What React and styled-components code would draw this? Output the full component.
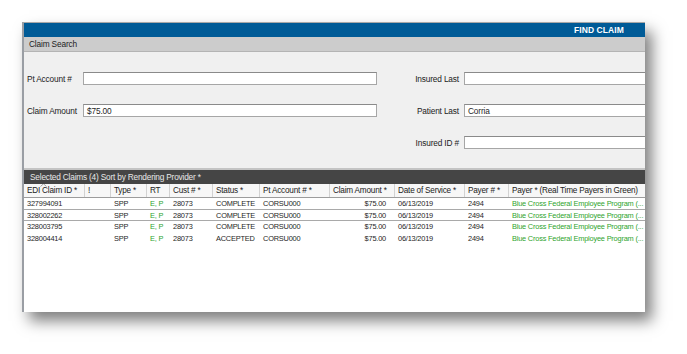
import React from "react";
import styled, { createGlobalStyle } from "styled-components";

const GlobalStyle = createGlobalStyle`
	html, body {
		margin: 0;
		padding: 0;
		background: #ffffff;
	}
	body {
		font-family: "Liberation Sans", Arial, sans-serif;
		color: #1e1e1e;
	}
`;

const Page = styled.div`
	width: 687px;
	height: 354px;
	padding: 22px 0 0 22px;
	box-sizing: border-box;
	overflow: hidden;
`;

const Window = styled.div`
	width: 623px;
	height: 290px;
	box-sizing: border-box;
	display: flex;
	flex-direction: column;
	background: #ffffff;
	border-top: 1px solid #a8a8a8;
	border-left: 2px solid #9a9ea4;
	overflow: hidden;
	box-shadow: 7px 9px 14px rgba(0, 0, 0, 0.5);
`;

const TitleBar = styled.div`
	height: 14px;
	flex: none;
	background: #005b97;
	color: #ffffff;
	font-size: 8.5px;
	font-weight: 700;
	display: flex;
	align-items: center;
	justify-content: flex-end;
	padding-right: 21px;
	letter-spacing: 0.1px;
`;

const SectionBar = styled.div`
	height: 15px;
	flex: none;
	box-sizing: border-box;
	background: #cccccc;
	border-bottom: 1px solid #b4b4b4;
	font-size: 8.3px;
	letter-spacing: -0.15px;
	display: flex;
	align-items: center;
	padding-left: 5px;
	color: #222;
`;

const Form = styled.div`
	height: 118px;
	flex: none;
	box-sizing: border-box;
	background: #f0f0f0;
	border-bottom: 2px solid #c4c4c4;
	padding: 20px 0 0 3px;
	display: grid;
	grid-template-columns: 56px 294px 87px 200px;
	grid-template-rows: 13px 13px 13px;
	row-gap: 19px;
	align-items: center;
`;

const Label = styled.span`
	font-size: 8.3px;
	letter-spacing: -0.15px;
	color: #222;
	white-space: nowrap;
	text-align: ${(p) => (p.right ? "right" : "left")};
	padding-right: ${(p) => (p.right ? "5px" : "0")};
`;

const Input = styled.div`
	height: 13px;
	box-sizing: border-box;
	background: #ffffff;
	border: 1px solid #a6a6a6;
	border-top-color: #8a8a8a;
	font-size: 8.3px;
	letter-spacing: -0.15px;
	padding-left: 3px;
	display: flex;
	align-items: center;
`;

const GroupBar = styled.div`
	height: 14px;
	flex: none;
	background: #454545;
	color: #e8e8e8;
	font-size: 8.3px;
	letter-spacing: -0.2px;
	display: flex;
	align-items: center;
	padding-left: 6px;
`;

const cols = "61px 26px 36px 23px 43px 47px 70px 65px 70px 44px 138px";

const HeaderRow = styled.div`
	display: grid;
	grid-template-columns: ${cols};
	height: 14px;
	flex: none;
	box-sizing: border-box;
	background: #f7f7f7;
	border-bottom: 1px solid #9c9c9c;
`;

const HeaderCell = styled.div`
	position: relative;
	font-size: 8.2px;
	letter-spacing: -0.2px;
	color: #222;
	white-space: nowrap;
	overflow: hidden;
	border-right: 1px solid #d2d2d2;
	padding-left: 3px;
	display: flex;
	align-items: center;
`;

const SortMark = styled.svg`
	position: absolute;
	left: 16px;
	top: -1px;
`;

const Row = styled.div`
	display: grid;
	grid-template-columns: ${cols};
	height: 11.5px;
	box-sizing: border-box;
	border-bottom: 1px solid ${(p) => (p.lined ? "#a9a9a9" : "transparent")};
`;

const Cell = styled.div`
	font-size: 7.4px;
	letter-spacing: -0.2px;
	line-height: 11px;
	white-space: nowrap;
	overflow: hidden;
	color: ${(p) => (p.green ? "#2ea42e" : "#1e1e1e")};
	text-align: ${(p) => (p.right ? "right" : "left")};
	padding: ${(p) => (p.right ? "0 9px 0 0" : "0 0 0 3px")};
`;

const Body = styled.div`
	flex: 1;
	background: #ffffff;
`;

const headers = [
	"EDI Claim ID *",
	"!",
	"Type *",
	"RT",
	"Cust #  *",
	"Status *",
	"Pt Account # *",
	"Claim Amount *",
	"Date of Service *",
	"Payer # *",
	"Payer * (Real Time Payers in Green)",
];

const claims = [
	{ id: "327994091", status: "COMPLETE" },
	{ id: "328002262", status: "COMPLETE" },
	{ id: "328003795", status: "COMPLETE" },
	{ id: "328004414", status: "ACCEPTED" },
];

export default function App() {
	return (
		<>
			<GlobalStyle />
			<Page>
				<Window>
					<TitleBar>FIND CLAIM</TitleBar>
					<SectionBar>Claim Search</SectionBar>
					<Form>
						<Label>Pt Account #</Label>
						<Input />
						<Label right>Insured Last</Label>
						<Input />

						<Label>Claim Amount</Label>
						<Input>$75.00</Input>
						<Label right>Patient Last</Label>
						<Input>Corria</Input>

						<span />
						<span />
						<Label right>Insured ID #</Label>
						<Input />
					</Form>
					<GroupBar>Selected Claims (4) Sort by Rendering Provider *</GroupBar>
					<HeaderRow>
						{headers.map((h, i) => (
							<HeaderCell key={h}>
								{i === 0 && (
									<SortMark width="7" height="4" viewBox="0 0 7 4">
										<path d="M0.5 3.5 L3.5 0.8 L6.5 3.5" fill="none" stroke="#8a8a8a" strokeWidth="0.8" />
									</SortMark>
								)}
								{h}
							</HeaderCell>
						))}
					</HeaderRow>
					<Body>
						{claims.map((c, i) => (
							<Row key={c.id} lined={i < 2}>
								<Cell>{c.id}</Cell>
								<Cell />
								<Cell>SPP</Cell>
								<Cell green>E, P</Cell>
								<Cell>28073</Cell>
								<Cell>{c.status}</Cell>
								<Cell>CORSU000</Cell>
								<Cell right>$75.00</Cell>
								<Cell>06/13/2019</Cell>
								<Cell>2494</Cell>
								<Cell green>Blue Cross Federal Employee Program (...</Cell>
							</Row>
						))}
					</Body>
				</Window>
			</Page>
		</>
	);
}
